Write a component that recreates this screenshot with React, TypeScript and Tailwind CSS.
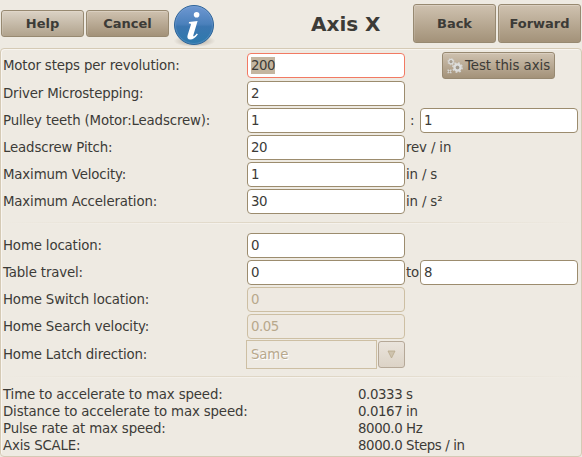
import type { ReactNode } from "react";

function ActionButton({ label, className }: { label: string; className: string }) {
  return (
    <button
      className={`flex shrink-0 items-center justify-center rounded-[3px] border border-[#978971] text-[13px] font-bold tracking-normal shadow-[inset_0_1px_0_#e4dccf88,inset_1px_0_0_#ffffff22] ${className}`}
    >
      {label}
    </button>
  );
}

function Field({ value, selected, disabled }: { value: string; selected?: boolean; disabled?: boolean }) {
  const look = disabled
    ? "border-[#cdbfa3] bg-[#eee9e1] text-[#b8a88c]"
    : selected
      ? "border-[#f27a63] bg-white"
      : "border-[#9c8c6e] bg-white";
  return (
    <div className={`flex h-[25px] w-[158px] shrink-0 items-center rounded-[4px] border pl-[3px] tracking-[-0.48px] ${look}`}>
      <span className={selected ? "bg-[#c4b6a0] leading-[17px]" : "leading-[17px]"}>{value}</span>
    </div>
  );
}

function Row({ label, children, className = "mb-[2px] h-[25px]" }: { label: string; children: ReactNode; className?: string }) {
  return (
    <div className={`flex items-center ${className}`}>
      <span className="w-[245px] shrink-0 pl-px">{label}</span>
      {children}
    </div>
  );
}

function Separator() {
  return (
    <div className="h-[2px] shrink-0">
      <div className="h-px bg-linear-to-r from-[#eeeae2] via-[#ddd4c2] to-[#eeeae2]" />
      <div className="h-px bg-linear-to-r from-[#eeeae2] via-[#f6f3ee] to-[#eeeae2]" />
    </div>
  );
}

function InfoIcon() {
  return (
    <svg className="ml-[3px] mt-[2px] shrink-0" width="46" height="46" viewBox="0 0 46 46">
      <defs>
        <linearGradient id="orb" x1="0" y1="0" x2="0" y2="1">
          <stop offset="0" stopColor="#6f98d2" />
          <stop offset=".48" stopColor="#4a80bb" />
          <stop offset=".54" stopColor="#3b76b0" />
          <stop offset="1" stopColor="#2c79ac" />
        </linearGradient>
        <radialGradient id="shade">
          <stop offset="0" stopColor="#71675a" stopOpacity=".6" />
          <stop offset="1" stopColor="#71675a" stopOpacity="0" />
        </radialGradient>
      </defs>
      <ellipse cx="22.5" cy="39" rx="21" ry="6" fill="url(#shade)" />
      <circle cx="22" cy="23" r="19.5" fill="url(#orb)" stroke="#2d6499" />
      <circle cx="22" cy="23" r="18.5" fill="none" stroke="#8bb1dc" strokeOpacity=".3" />
      <circle cx="24.6" cy="12.8" r="2.8" fill="#fff" />
      <path d="M17 20 25.6 18.9 21.4 33C20.8 35.1 22.4 34.4 24.8 31.4L25.9 32.2C23.2 36 20.9 37.4 18.3 37.4 15.7 37.4 14.9 35.6 15.6 33.2L18.8 23C19.2 21.8 18.7 21.4 16.8 21.4Z" fill="#fff" />
    </svg>
  );
}

function GearsIcon() {
  return (
    <svg className="shrink-0" width="16" height="16" viewBox="0 0 16 16" fill="none">
      <circle cx="10.5" cy="9.5" r="4.6" stroke="#d8d8d6" strokeWidth="1.6" strokeDasharray="1.8 1.81" />
      <circle cx="10.5" cy="9.5" r="2.9" stroke="#dededc" strokeWidth="2.6" />
      <circle cx="10.5" cy="9.5" r="1.5" fill="#a89c8a" stroke="#8e8e8c" strokeWidth=".6" />
      <circle cx="4" cy="3.7" r="3.1" stroke="#cfcfcc" strokeWidth="1.1" strokeDasharray="1.2 1.23" />
      <circle cx="4" cy="3.7" r="2.1" stroke="#dcdcda" strokeWidth="1.5" />
      <circle cx="4" cy="3.7" r="1.2" fill="#b0a491" stroke="#929290" strokeWidth=".5" />
      <path d="M.5 11.5h1.4v.7h1.2v-.7h1.4v1.4h-.7v1h.7v1.4H3.1v-.7H1.9v.7H.5v-1.4h.7v-1H.5Z" fill="#d6d6d3" />
      <circle cx="2.5" cy="13.4" r=".7" fill="#a29785" />
    </svg>
  );
}

const results = [
  ["Time to accelerate to max speed:", "0.0333 s"],
  ["Distance to accelerate to max speed:", "0.0167 in"],
  ["Pulse rate at max speed:", "8000.0 Hz"],
  ["Axis SCALE:", "8000.0 Steps / in"],
];

export default function App() {
  return (
    <main className="flex h-[457px] w-[582px] flex-col overflow-hidden bg-[#eeeae2] font-['DejaVu_Sans',sans-serif] text-[13.33px] leading-[17px] tracking-[-0.15px] whitespace-pre text-[#3c3b37]">
      <header className="flex h-[48px] shrink-0 items-start pl-px">
        <ActionButton label="Help" className="mt-[10px] h-[27px] w-[83px] bg-linear-to-b from-[#dbd2c5] to-[#b1a38d]" />
        <ActionButton label="Cancel" className="ml-[2px] mt-[10px] h-[27px] w-[83px] bg-linear-to-b from-[#cfc2b0] to-[#a39279]" />
        <InfoIcon />
        <h1 className="ml-[93px] mt-[12px] w-[102px] text-[20px] font-bold leading-[24px] tracking-normal">Axis X</h1>
        <ActionButton label="Back" className="mt-[4px] h-[39px] w-[83px] bg-linear-to-b from-[#cfc2b0] to-[#a39279]" />
        <ActionButton label="Forward" className="ml-[2px] mt-[4px] h-[39px] w-[83px] bg-linear-to-b from-[#cfc2b0] to-[#a39279]" />
      </header>

      <section className="flex h-[409px] w-[582px] shrink-0 flex-col rounded-[4px] border border-[#d5cab5] pl-px pt-[4px] shadow-[inset_1px_1px_0_#f8f5f0]">
        <Row label="Motor steps per revolution:" className="mb-[3px] h-[25px]">
          <Field value="200" selected />
          <button className="ml-[37px] flex h-[27px] w-[113px] items-center rounded-[3px] border border-[#978971] bg-linear-to-b from-[#cfc2b0] to-[#a39279] pl-[4px] shadow-[inset_0_1px_0_#e4dccf88]">
            <GearsIcon />
            <span className="ml-[2px] tracking-[-0.05px]">Test this axis</span>
          </button>
        </Row>
        <Row label="Driver Microstepping:"><Field value="2" /></Row>
        <Row label="Pulley teeth (Motor:Leadscrew):">
          <Field value="1" />
          <span className="w-[15px] shrink-0 pl-[5px]">:</span>
          <Field value="1" />
        </Row>
        <Row label="Leadscrew Pitch:"><Field value="20" /><span className="pl-px">rev / in</span></Row>
        <Row label="Maximum Velocity:"><Field value="1" /><span className="pl-px">in / s</span></Row>
        <Row label="Maximum Acceleration:" className="mb-[8px] h-[25px]"><Field value="30" /><span className="pl-px">in / s²</span></Row>
        <Separator />
        <Row label="Home location:" className="mb-[2px] mt-[9px] h-[25px]"><Field value="0" /></Row>
        <Row label="Table travel:">
          <Field value="0" />
          <span className="w-[15px] shrink-0 pl-px">to</span>
          <Field value="8" />
        </Row>
        <Row label="Home Switch location:"><Field value="0" disabled /></Row>
        <Row label="Home Search velocity:" className="mb-px h-[25px]"><Field value="0.05" disabled /></Row>
        <Row label="Home Latch direction:" className="mb-[7px] h-[29px]">
          <div className="-ml-px flex h-[29px] w-[131px] items-center border border-[#cdbfa3] pl-[4px] text-[#b8a88c] [text-shadow:1px_1px_0_#fff]">Same</div>
          <button className="ml-px flex h-[27px] w-[27px] items-center justify-center rounded-[3px] border border-[#b5a897] bg-linear-to-b from-[#eae4dc] to-[#dcd3c6]">
            <svg width="9" height="9" viewBox="0 0 9 9"><path d="M1 1H8L4.5 8Z" fill="#cec3ae" stroke="#b8a88c" strokeWidth=".8" /></svg>
          </button>
        </Row>
        <Separator />
        <dl className="mt-[8px]">
          {results.map(([label, value]) => (
            <div key={label} className="flex h-[17px]">
              <dt className="w-[356px] shrink-0 pl-px">{label}</dt>
              <dd className="tracking-[-0.4px]">{value}</dd>
            </div>
          ))}
        </dl>
      </section>
    </main>
  );
}
